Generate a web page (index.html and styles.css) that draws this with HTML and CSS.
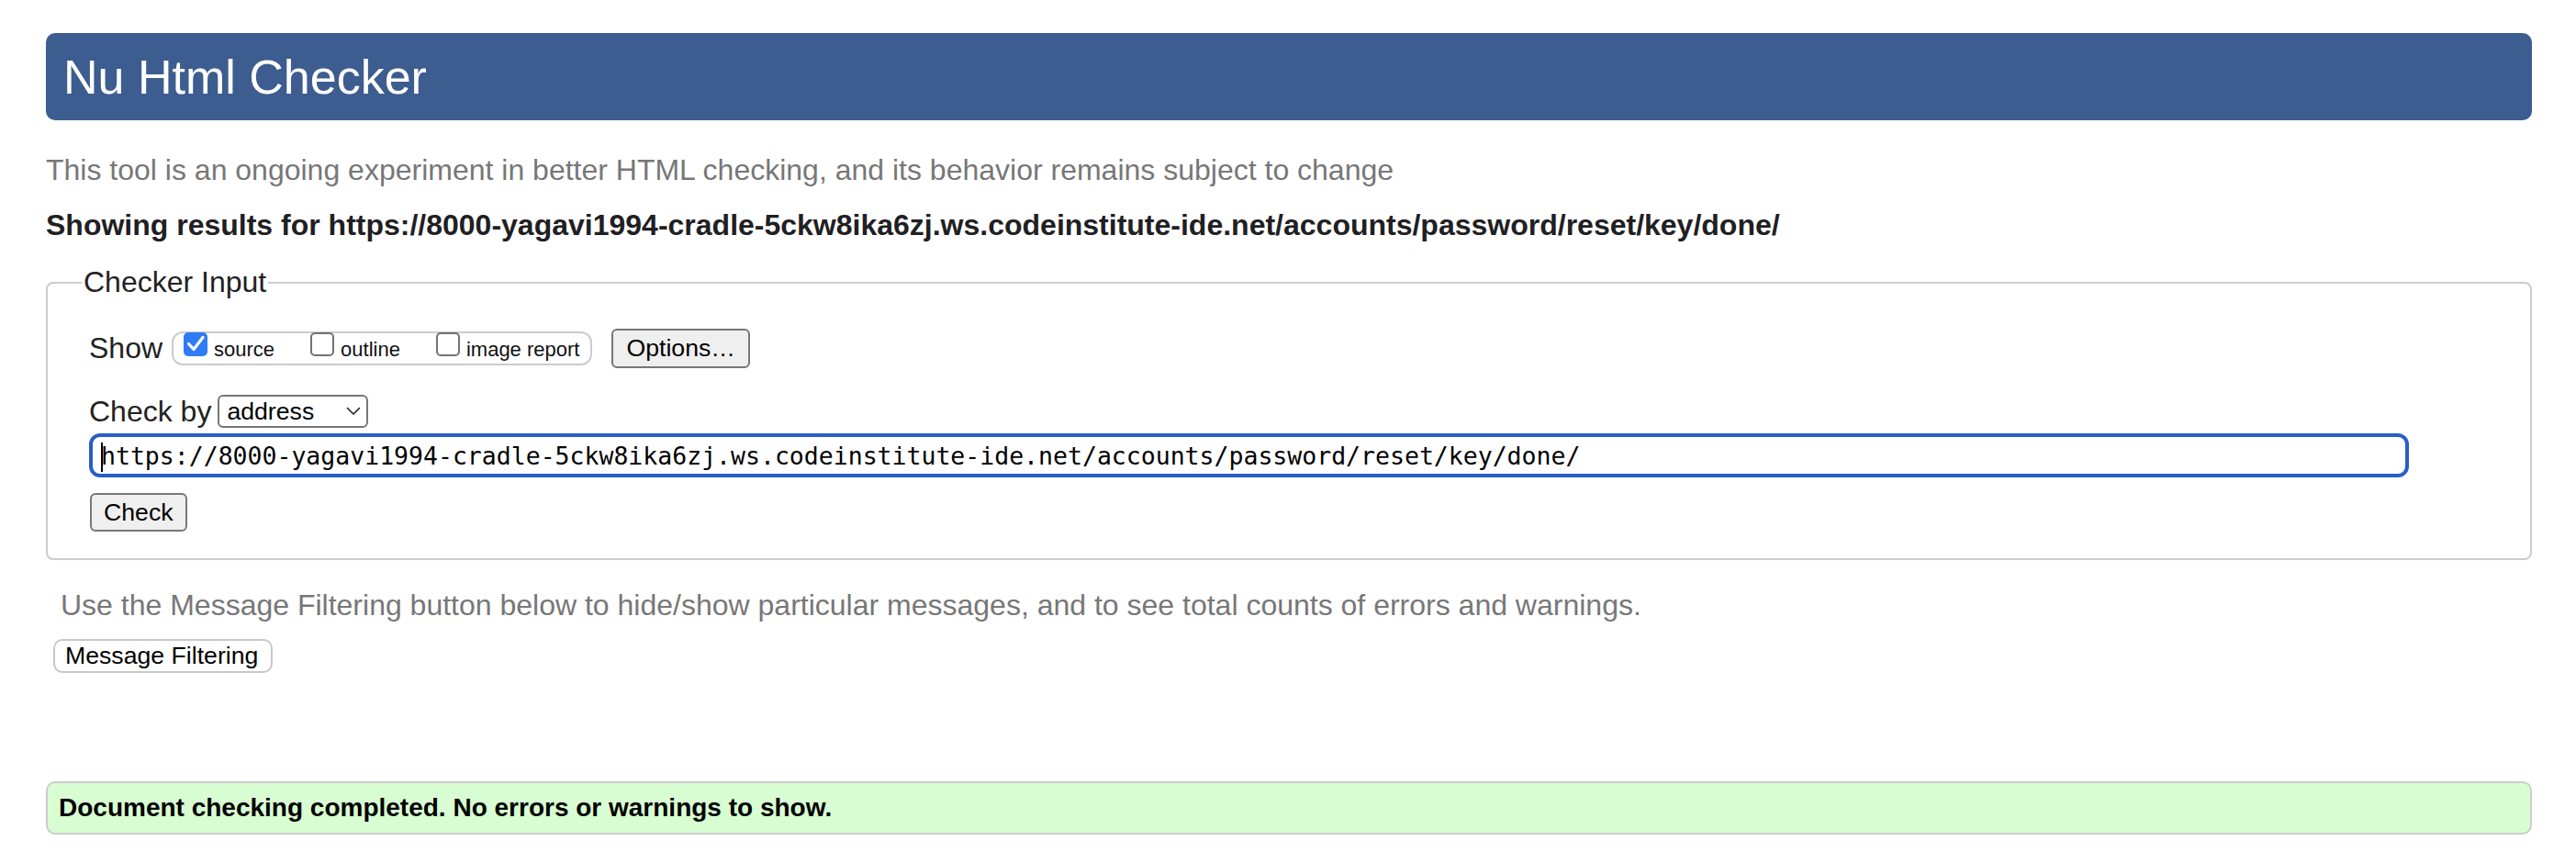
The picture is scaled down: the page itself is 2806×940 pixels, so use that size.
FILE: index.html
```html
<!DOCTYPE html>
<html lang="en">
<head>
<meta charset="utf-8">
<title>Nu Html Checker</title>
<link rel="stylesheet" href="styles.css">
</head>
<body>
<h1 class="title">Nu Html Checker</h1>
<p class="intro">This tool is an ongoing experiment in better HTML checking, and its behavior remains subject to change</p>
<p class="results">Showing results for https://8000-yagavi1994-cradle-5ckw8ika6zj.ws.codeinstitute-ide.net/accounts/password/reset/key/done/</p>
<fieldset class="checker">
  <legend class="legend">Checker Input</legend>
  <div class="row-show">
    <span class="lbl">Show</span>
    <div class="group">
      <label class="opt">
        <span class="cb cb-on"><svg width="26" height="26" viewBox="0 0 26 26"><path d="M5.5 12.5 L11 18.5 L21 5.5" fill="none" stroke="#fff" stroke-width="3.2" stroke-linecap="round" stroke-linejoin="round"/></svg></span>
        <span class="opt-text">source</span>
      </label>
      <label class="opt">
        <span class="cb"></span>
        <span class="opt-text">outline</span>
      </label>
      <label class="opt">
        <span class="cb"></span>
        <span class="opt-text">image report</span>
      </label>
    </div>
    <button class="btn btn-opt" type="button">Options…</button>
  </div>
  <div class="row-by">
    <span class="lbl">Check by</span>
    <span class="sel-wrap">
      <select class="sel"><option>address</option></select>
      <svg class="chev" width="16" height="10" viewBox="0 0 16 10"><path d="M1.5 1.5 L8 8 L14.5 1.5" fill="none" stroke="#222" stroke-width="1.6" stroke-linecap="round" stroke-linejoin="round"/></svg>
    </span>
  </div>
  <div class="url-wrap">
    <input class="url" type="text" value="https://8000-yagavi1994-cradle-5ckw8ika6zj.ws.codeinstitute-ide.net/accounts/password/reset/key/done/">
    <span class="caret"></span>
  </div>
  <button class="btn btn-check" type="button">Check</button>
</fieldset>
<p class="hint">Use the Message Filtering button below to hide/show particular messages, and to see total counts of errors and warnings.</p>
<button class="btn-filter" type="button">Message Filtering</button>
<div class="success">Document checking completed. No errors or warnings to show.</div>
</body>
</html>
```

FILE: styles.css
```css
html {
  background: #fff;
}
body {
  margin: 0;
  padding: 36px 48px 0 50px;
  font-family: "Liberation Sans", Arial, Helvetica, sans-serif;
  font-size: 32px;
  color: #222;
}
.title {
  margin: 0;
  height: 95px;
  display: flex;
  align-items: center;
  padding-left: 19px;
  background: #3d5c90;
  color: #fff;
  font-size: 52px;
  font-weight: normal;
  border-radius: 10px;
}
.intro {
  margin: 36px 0 0;
  line-height: 37px;
  color: #777;
}
.results {
  margin: 23px 0 0;
  line-height: 37px;
  font-weight: bold;
  color: #1f2023;
}
.checker {
  margin: 25px 0 0;
  padding: 0 45px 29px 45px;
  border: 2px solid #ccc;
  border-radius: 8px;
  min-width: 0;
}
.legend {
  padding: 0 2px;
  margin-left: -8px;
  line-height: 37px;
  font-size: 32px;
  color: #222;
}
.lbl {
  line-height: 37px;
  color: #222;
}
.row-show {
  display: flex;
  align-items: center;
  margin-top: 32px;
  height: 43px;
}
.group {
  display: flex;
  align-items: flex-start;
  gap: 39px;
  box-sizing: border-box;
  height: 37px;
  margin-left: 10px;
  padding: 0 12px 0 11px;
  border: 2px solid #ccc;
  border-radius: 12px;
}
.opt {
  display: flex;
  align-items: flex-start;
  gap: 7px;
}
.cb {
  box-sizing: border-box;
  width: 26px;
  height: 26px;
  margin-top: -1px;
  border: 2px solid #737373;
  border-radius: 5px;
  background: #fff;
  display: block;
}
.cb-on {
  border: none;
  background: #2f7bf5;
}
.cb svg {
  display: block;
}
.opt-text {
  margin-top: 5px;
  font-size: 22px;
  line-height: 25px;
  color: #111;
}
.btn {
  box-sizing: border-box;
  font-family: "Liberation Sans", Arial, Helvetica, sans-serif;
  font-size: 26.67px;
  color: #000;
  background: #efefef;
  border: 2px solid #767676;
  border-radius: 6px;
  padding: 0 14px;
  margin: 0;
}
.btn-opt {
  height: 43px;
  margin-left: 21px;
}
.row-by {
  display: flex;
  align-items: center;
  margin-top: 29px;
  height: 36px;
}
.sel-wrap {
  position: relative;
  display: block;
  margin-left: 7px;
}
.sel {
  -webkit-appearance: none;
  appearance: none;
  box-sizing: border-box;
  display: block;
  width: 164px;
  height: 36px;
  margin: 0;
  padding: 0 0 0 8px;
  border: 2px solid #767676;
  border-radius: 6px;
  background: #fff;
  font-family: "Liberation Sans", Arial, Helvetica, sans-serif;
  font-size: 26.67px;
  color: #000;
}
.chev {
  position: absolute;
  right: 8px;
  top: 13px;
}
.url-wrap {
  position: relative;
  margin-top: 6px;
  width: 2527px;
}
.url {
  box-sizing: border-box;
  display: block;
  width: 2527px;
  height: 48px;
  margin: 0;
  padding: 0 0 0 9px;
  border: 4px solid #2a5ec6;
  border-radius: 12px;
  outline: none;
  background: #fff;
  font-family: "DejaVu Sans Mono", Menlo, monospace;
  font-size: 26.5px;
  color: #000;
}
.caret {
  position: absolute;
  left: 13px;
  top: 10px;
  width: 2px;
  height: 32px;
  background: #000;
}
.btn-check {
  display: block;
  height: 42px;
  margin-top: 17px;
  margin-left: 1px;
  padding: 0 13px;
}
.hint {
  margin: 31px 0 0;
  padding-left: 16px;
  line-height: 37px;
  color: #777;
}
.btn-filter {
  display: block;
  box-sizing: border-box;
  height: 37px;
  margin: 18px 0 0 8px;
  padding: 0 14px 0 11px;
  border: 2px solid #c8c8c8;
  border-radius: 10px;
  background: #fff;
  font-family: "Liberation Sans", Arial, Helvetica, sans-serif;
  font-size: 26.67px;
  color: #000;
}
.success {
  box-sizing: border-box;
  display: flex;
  align-items: center;
  height: 58px;
  margin-top: 118px;
  padding-left: 12px;
  border: 2px solid #ccc;
  border-radius: 10px;
  background: #d8fdd2;
  font-size: 28px;
  font-weight: bold;
  color: #000;
}
```
